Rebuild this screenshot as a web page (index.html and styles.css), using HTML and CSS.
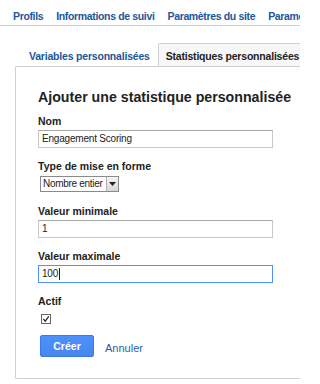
FILE: index.html
```html
<!DOCTYPE html>
<html lang="fr">
<head>
<meta charset="utf-8">
<link rel="stylesheet" href="styles.css">
</head>
<body>
<nav class="topnav">
  <a class="nav-link">Profils</a>
  <a class="nav-link">Informations de suivi</a>
  <a class="nav-link">Paramètres du site</a>
  <a class="nav-link">Paramètres</a>
</nav>
<div class="wrap">
  <div class="tabs">
    <div class="tab">Variables personnalisées</div>
    <div class="tab active">Statistiques personnalisées</div>
  </div>
  <div class="panel">
    <h1 class="title">Ajouter une statistique personnalisée</h1>
    <div class="field">
      <div class="label">Nom</div>
      <div class="input">Engagement Scoring</div>
    </div>
    <div class="field field-select">
      <div class="label">Type de mise en forme</div>
      <div class="select"><span class="select-text">Nombre entier</span><span class="select-btn"><svg width="7" height="4" viewBox="0 0 7 4"><path d="M0 0h7L3.5 4z" fill="#222"/></svg></span></div>
    </div>
    <div class="field">
      <div class="label">Valeur minimale</div>
      <div class="input">1</div>
    </div>
    <div class="field">
      <div class="label">Valeur maximale</div>
      <div class="input focus">100<span class="caret"></span></div>
    </div>
    <div class="field">
      <div class="label">Actif</div>
      <div class="checkbox"><svg width="8" height="8" viewBox="0 0 8 8"><path d="M1.3 3.8 L3.2 6.2 L6.8 1.4" fill="none" stroke="#222" stroke-width="1.2"/></svg></div>
    </div>
    <div class="actions">
      <button class="btn">Créer</button>
      <a class="cancel">Annuler</a>
    </div>
  </div>
</div>
</body>
</html>
```

FILE: styles.css
```css
html, body {
  margin: 0;
  padding: 0;
  background: #fff;
}
body {
  font-family: "Liberation Sans", Arial, sans-serif;
  color: #222;
  width: 300px;
  height: 384px;
  overflow: hidden;
}
.topnav {
  display: flex;
  gap: 13px;
  padding: 9px 0 2px 13px;
  border-bottom: 1px solid #d0d0d0;
  white-space: nowrap;
  overflow: hidden;
}
.nav-link {
  font-size: 10.5px;
  letter-spacing: -0.35px;
  font-weight: bold;
  line-height: 14px;
  color: #22569a;
}
.wrap {
  margin: 17px 0 0 15px;
  overflow: hidden;
}
.tabs {
  display: flex;
  padding-left: 6px;
  height: 23px;
  white-space: nowrap;
}
.tab {
  font-size: 10.5px;
  letter-spacing: -0.2px;
  font-weight: bold;
  line-height: 22px;
  padding: 2px 8px 0 8px;
  color: #22569a;
}
.tab.active {
  color: #222;
  background: #f7f7f7;
  border: 1px solid #d0d0d0;
  border-bottom: none;
  border-radius: 2px 2px 0 0;
  padding: 1px 12px 0 7px;
}
.panel {
  height: 313px;
  border: 1px solid #d0d0d0;
  border-right: none;
  border-radius: 2px 0 0 2px;
  box-shadow: 0 1px 1px rgba(0,0,0,0.08);
  padding: 0 0 0 22px;
  box-sizing: border-box;
}
.title {
  margin: 21px 0 8px 0;
  font-size: 14.2px;
  line-height: 18px;
  font-weight: bold;
  color: #222;
  white-space: nowrap;
}
.field {
  margin-bottom: 11px;
}
.field-select {
  margin-bottom: 12px;
}
.label {
  font-size: 10.5px;
  font-weight: bold;
  line-height: 14px;
  color: #222;
  margin-bottom: 2px;
  white-space: nowrap;
}
.input {
  width: 235px;
  height: 18px;
  box-sizing: border-box;
  border: 1px solid #c8c8c8;
  border-top-color: #a8a8a8;
  font-size: 10px;
  letter-spacing: -0.2px;
  line-height: 16px;
  padding-left: 3px;
  color: #222;
  display: flex;
  align-items: center;
  white-space: nowrap;
}
.input.focus {
  border-color: #4d90fe;
}
.caret {
  display: inline-block;
  width: 1px;
  height: 12px;
  background: #222;
  margin-left: 1px;
}
.select {
  display: flex;
  width: 79px;
  height: 16px;
  box-sizing: border-box;
  margin: 3px 0 0 2px;
  border: 1px solid #8a8a8a;
  font-size: 10px;
  letter-spacing: -0.3px;
  line-height: 14px;
  color: #222;
  white-space: nowrap;
}
.select-text {
  flex: 1;
  padding-left: 2px;
  overflow: hidden;
}
.select-btn {
  width: 11px;
  background: linear-gradient(#f4f4f4, #d8d8d8);
  border-left: 1px solid #b0b0b0;
  display: flex;
  align-items: center;
  justify-content: center;
}
.checkbox {
  width: 8px;
  height: 8px;
  border: 1px solid #666;
  margin: 6px 0 0 3px;
  display: flex;
  background: #fff;
}
.actions {
  display: flex;
  align-items: center;
  gap: 11px;
  margin-top: 1px;
  padding-left: 2px;
}
.btn {
  width: 54px;
  height: 22px;
  background: linear-gradient(#4d90fe, #4787ed);
  border: 1px solid #3b7ae6;
  border-radius: 2px;
  color: #fff;
  font-family: "Liberation Sans", Arial, sans-serif;
  font-size: 10.5px;
  font-weight: bold;
  padding: 0;
  line-height: 18px;
}
.cancel {
  font-size: 11px;
  color: #2a5db0;
  margin-top: 4px;
}
```
